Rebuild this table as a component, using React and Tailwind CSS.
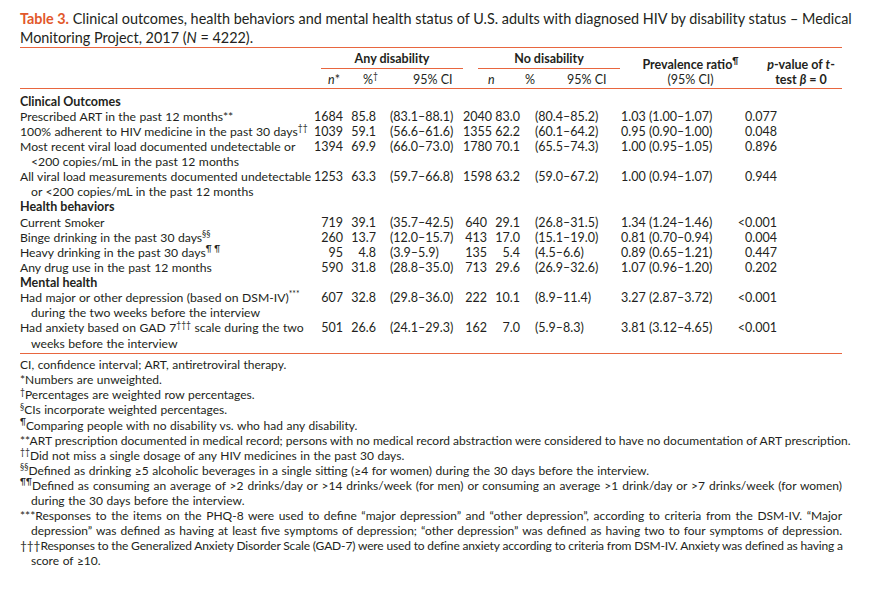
import React from "react";

const Sup = ({ children }) => (
  <sup className="text-[8.5px] top-[-0.55em]">{children}</sup>
);

const rows = [
  { section: "Clinical Outcomes" },
  {
    label: [<>Prescribed ART in the past 12 months**</>],
    d: ["1684", "85.8", "(83.1–88.1)", "2040", "83.0", "(80.4–85.2)", "1.03 (1.00–1.07)", "0.077"],
  },
  {
    label: [<>100% adherent to HIV medicine in the past 30 days<Sup>††</Sup></>],
    d: ["1039", "59.1", "(56.6–61.6)", "1355", "62.2", "(60.1–64.2)", "0.95 (0.90–1.00)", "0.048"],
  },
  {
    label: [<>Most recent viral load documented undetectable or</>, <>&lt;200 copies/mL in the past 12 months</>],
    d: ["1394", "69.9", "(66.0–73.0)", "1780", "70.1", "(65.5–74.3)", "1.00 (0.95–1.05)", "0.896"],
  },
  {
    label: [<>All viral load measurements documented undetectable</>, <>or &lt;200 copies/mL in the past 12 months</>],
    d: ["1253", "63.3", "(59.7–66.8)", "1598", "63.2", "(59.0–67.2)", "1.00 (0.94–1.07)", "0.944"],
  },
  { section: "Health behaviors" },
  {
    label: [<>Current Smoker</>],
    d: ["719", "39.1", "(35.7–42.5)", "640", "29.1", "(26.8–31.5)", "1.34 (1.24–1.46)", "<0.001"],
  },
  {
    label: [<>Binge drinking in the past 30 days<Sup>§§</Sup></>],
    d: ["260", "13.7", "(12.0–15.7)", "413", "17.0", "(15.1–19.0)", "0.81 (0.70–0.94)", "0.004"],
  },
  {
    label: [<>Heavy drinking in the past 30 days<Sup>¶ ¶</Sup></>],
    d: ["95", "4.8", "(3.9–5.9)", "135", "5.4", "(4.5–6.6)", "0.89 (0.65–1.21)", "0.447"],
  },
  {
    label: [<>Any drug use in the past 12 months</>],
    d: ["590", "31.8", "(28.8–35.0)", "713", "29.6", "(26.9–32.6)", "1.07 (0.96–1.20)", "0.202"],
  },
  { section: "Mental health" },
  {
    label: [<>Had major or other depression (based on DSM-IV)<Sup>***</Sup></>, <>during the two weeks before the interview</>],
    d: ["607", "32.8", "(29.8–36.0)", "222", "10.1", "(8.9–11.4)", "3.27 (2.87–3.72)", "<0.001"],
  },
  {
    label: [<>Had anxiety based on GAD 7<Sup>†††</Sup> scale during the two</>, <>weeks before the interview</>],
    d: ["501", "26.6", "(24.1–29.3)", "162", "7.0", "(5.9–8.3)", "3.81 (3.12–4.65)", "<0.001"],
  },
];

const J = "whitespace-nowrap text-justify [text-align-last:justify]";

export default function App() {
  return (
    <div className="w-[870px] h-[592px] bg-white overflow-hidden text-[#231f20] [font-family:Lato,'Liberation_Sans',sans-serif]">
      <div className="pl-[20px] w-[842px] pt-[9px]">
        {/* Title */}
        <div className="text-[14.4px] leading-[19px]">
          <div className="whitespace-nowrap">
            <span className="font-bold text-[#e2582b]">Table 3.</span> Clinical outcomes, health behaviors and mental health status of U.S. adults with diagnosed HIV by disability status – Medical
          </div>
          <div>
            Monitoring Project, 2017 (<i>N</i> = 4222).
          </div>
        </div>

        {/* Table header */}
        <div className="border-t border-b border-[#e8663f] text-[12.5px] leading-[15px] grid grid-cols-[288px_155px_158px_139px_82px]">
          <div className="row-span-2"></div>
          <div className="pt-[3px]">
            <div className="ml-[13px] pb-[2px] border-b border-[#e8663f] text-center font-bold">Any disability</div>
          </div>
          <div className="pt-[3px]">
            <div className="ml-[15px] mr-[1px] pb-[2px] border-b border-[#e8663f] text-center font-bold">No disability</div>
          </div>
          <div className="row-span-2 flex flex-col justify-end items-center pb-[1px]">
            <div className="font-bold whitespace-nowrap">Prevalence ratio<Sup>¶</Sup></div>
            <div>(95% CI)</div>
          </div>
          <div className="row-span-2 flex flex-col justify-end items-center pb-[1px]">
            <div className="font-bold whitespace-nowrap"><i>p</i>-value of <i>t</i>-</div>
            <div className="font-bold whitespace-nowrap">test <i>β</i> = 0</div>
          </div>
          <div className="pt-[3px] pb-[1px] flex whitespace-nowrap">
            <span className="w-[55px] pl-[20px]"><i>n</i>*</span>
            <span className="w-[50px]">%<Sup>†</Sup></span>
            <span>95% CI</span>
          </div>
          <div className="pt-[3px] pb-[1px] flex whitespace-nowrap">
            <span className="w-[62px] pl-[25px]"><i>n</i></span>
            <span className="w-[42px]">%</span>
            <span>95% CI</span>
          </div>
        </div>

        {/* Table body */}
        <div className="border-b border-[#e8663f] pt-[4.5px] pb-[2px] text-[12.5px] leading-[15.125px] tabular-nums grid grid-cols-[288px_35px_33px_87px_24px_33px_101px_79px_142px]">
          {rows.map((r, i) =>
            r.section ? (
              <div key={i} className="col-span-9 font-bold">{r.section}</div>
            ) : (
              <React.Fragment key={i}>
                <div className="whitespace-nowrap text-[12.2px] [word-spacing:0.3px]">
                  {r.label.map((l, j) => (
                    <div key={j} className={j > 0 ? "pl-[11px]" : ""}>{l}</div>
                  ))}
                </div>
                <div className="text-right whitespace-nowrap">{r.d[0]}</div>
                <div className="text-right whitespace-nowrap">{r.d[1]}</div>
                <div className="pl-[14px] whitespace-nowrap">{r.d[2]}</div>
                <div className="text-right whitespace-nowrap">{r.d[3]}</div>
                <div className="text-right whitespace-nowrap">{r.d[4]}</div>
                <div className="pl-[15px] whitespace-nowrap">{r.d[5]}</div>
                <div className="whitespace-nowrap">{r.d[6]}</div>
                <div className="text-right pr-[65px] whitespace-nowrap">{r.d[7]}</div>
              </React.Fragment>
            )
          )}
        </div>

        {/* Footnotes */}
        <div className="pt-[3.5px] text-[12px] leading-[15.1px] [word-spacing:0.5px]">
          <div>CI, confidence interval; ART, antiretroviral therapy.</div>
          <div>*Numbers are unweighted.</div>
          <div><Sup>†</Sup>Percentages are weighted row percentages.</div>
          <div><Sup>§</Sup>CIs incorporate weighted percentages.</div>
          <div><Sup>¶</Sup>Comparing people with no disability vs. who had any disability.</div>
          <div className={J + " [word-spacing:0px]"}>**ART prescription documented in medical record; persons with no medical record abstraction were considered to have no documentation of ART prescription.</div>
          <div><Sup>††</Sup>Did not miss a single dosage of any HIV medicines in the past 30 days.</div>
          <div className="whitespace-nowrap"><Sup>§§</Sup>Defined as drinking ≥5 alcoholic beverages in a single sitting (≥4 for women) during the 30 days before the interview.</div>
          <div className={J + " [word-spacing:0px]"}><Sup>¶¶</Sup>Defined as consuming an average of &gt;2 drinks/day or &gt;14 drinks/week (for men) or consuming an average &gt;1 drink/day or &gt;7 drinks/week (for women)</div>
          <div className="pl-[11px]">during the 30 days before the interview.</div>
          <div className={J + " [word-spacing:0px]"}>***Responses to the items on the PHQ-8 were used to define “major depression” and “other depression”, according to criteria from the DSM-IV. “Major</div>
          <div className={"pl-[11px] [word-spacing:0px] " + J}>depression” was defined as having at least five symptoms of depression; “other depression” was defined as having two to four symptoms of depression.</div>
          <div className={J + " [word-spacing:0px] tracking-[-0.15px]"}>†††Responses to the Generalized Anxiety Disorder Scale (GAD-7) were used to define anxiety according to criteria from DSM-IV. Anxiety was defined as having a</div>
          <div className="pl-[11px]">score of ≥10.</div>
        </div>
      </div>
    </div>
  );
}
